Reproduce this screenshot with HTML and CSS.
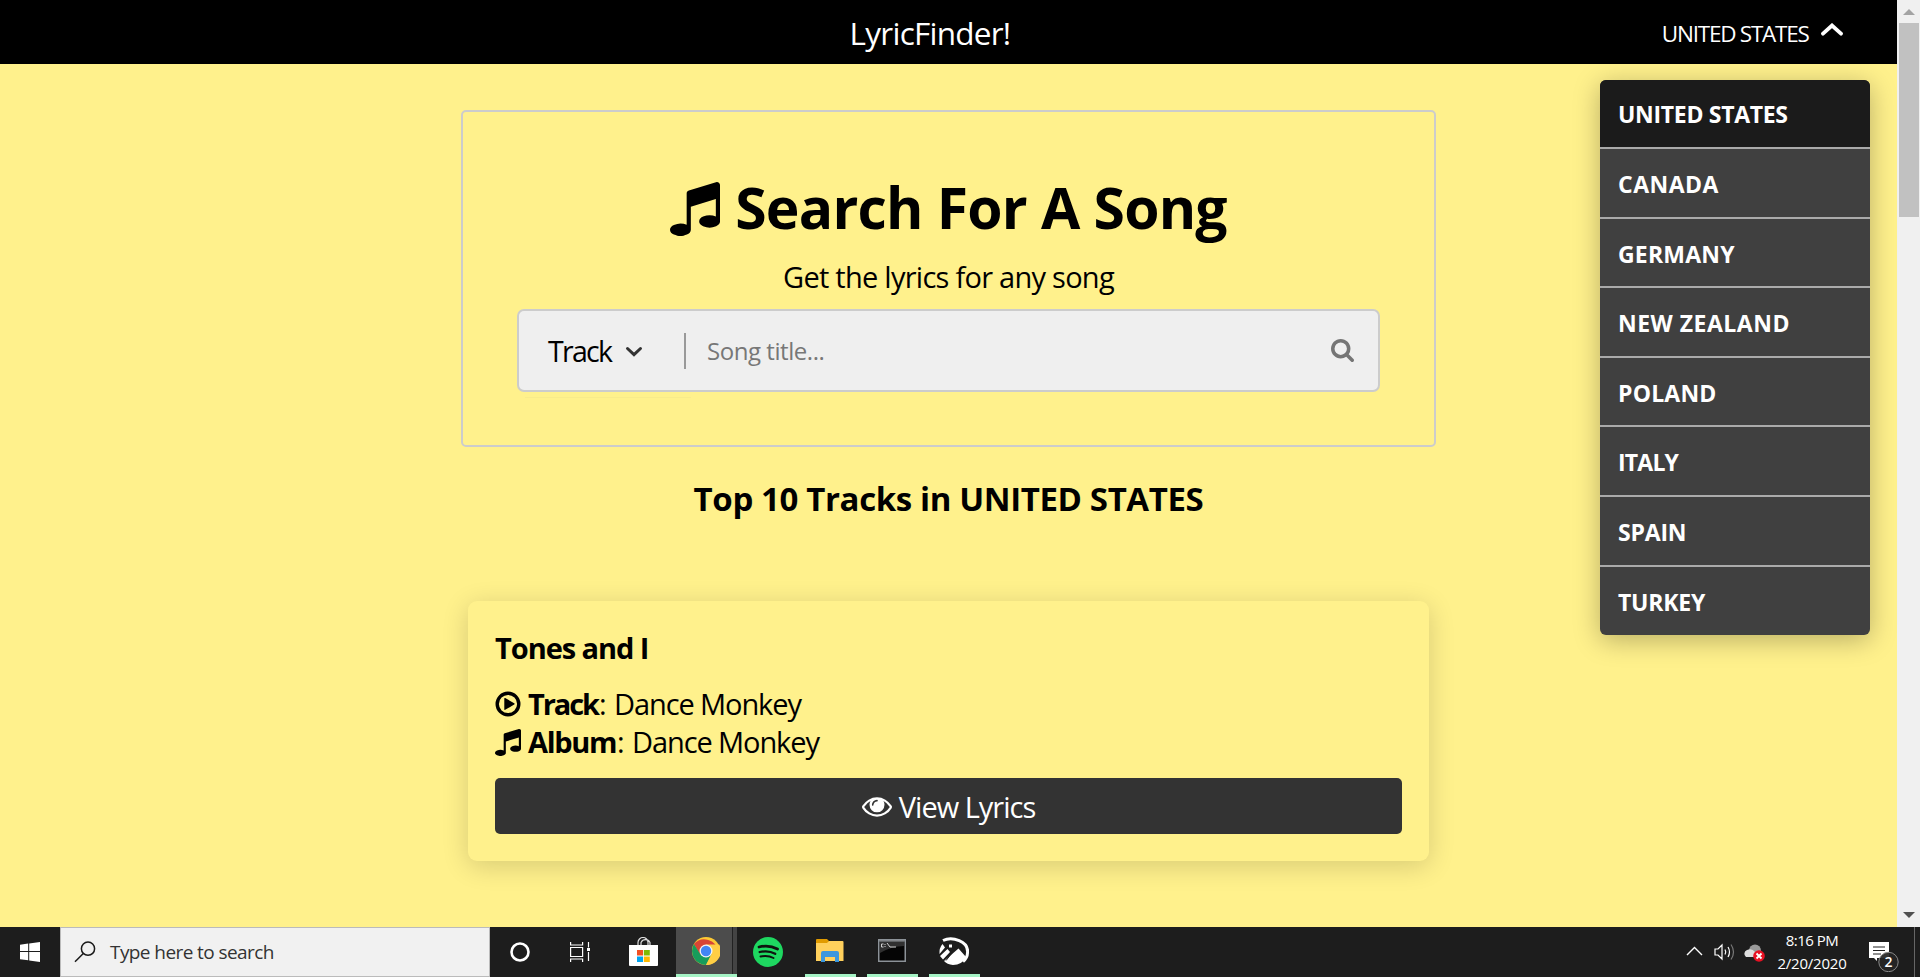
FILE: index.html
```html
<!DOCTYPE html>
<html lang="en">
<head>
<meta charset="utf-8">
<title>LyricFinder!</title>
<link rel="stylesheet" href="styles.css">
</head>
<body>
<svg class="defs" width="0" height="0">
  <symbol id="music" viewBox="0 128 1536 1664" preserveAspectRatio="none"><path d="M1536 224v1120q0 50-34 89t-86 60.500-103.500 32-96.500 10.500-96.500-10.500-103.500-32-86-60.500-34-89 34-89 86-60.500 103.500-32 96.500-10.500q105 0 192 39v-537l-768 237v709q0 50-34 89t-86 60.500-103.500 32-96.500 10.500-96.500-10.500-103.500-32-86-60.500-34-89 34-89 86-60.500 103.500-32 96.500-10.500q105 0 192 39v-967q0-31 19-56.500t49-35.500l832-256q12-4 28-4 40 0 68 28t28 68z"/></symbol>
</svg>
<div class="screen">
  <div class="browser">
    <div class="page">
      <header class="nav">
        <div></div>
        <div class="brand">LyricFinder!</div>
        <div class="country"><span>UNITED STATES</span>
          <svg class="up" viewBox="0 0 22 13"><path d="M2 10.700 11 2.500 20 10.700" fill="none" stroke="#fff" stroke-width="3.800" stroke-linecap="round"/></svg>
          <ul class="menu">
            <li class="active">UNITED STATES</li><li class="wide">CANADA</li><li>GERMANY</li><li class="wide">NEW ZEALAND</li><li>POLAND</li><li class="tight">ITALY</li><li class="snug">SPAIN</li><li class="snug">TURKEY</li>
          </ul>
        </div>
      </header>
      <main class="main">
        <section class="search">
          <h1><svg class="bignote"><use href="#music"/></svg><span>Search For A Song</span></h1>
          <p class="sub">Get the lyrics for any song</p>
          <div class="field">
            <span class="kind">Track</span>
            <svg class="down" viewBox="0 0 18 12"><path d="M2.500 2.500 9 8.700 15.500 2.500" fill="none" stroke="#333" stroke-width="3" stroke-linecap="round"/></svg>
            <span class="bar"></span>
            <span class="ph">Song title...</span>
            <svg class="glass" viewBox="0 128 1664 1664"><path d="M1152 832q0-185-131.500-316.500t-316.500-131.500-316.500 131.500-131.500 316.500 131.500 316.500 316.500 131.500 316.500-131.500 131.500-316.500zm512 832q0 52-38 90t-90 38q-54 0-90-38l-343-342q-179 124-399 124-143 0-273.500-55.500t-225-150-150-225-55.500-273.500 55.500-273.500 150-225 225-150 273.500-55.500 273.500 55.500 225 150 150 225 55.500 273.500q0 220-124 399l343 343q37 37 37 90z"/></svg>
          </div>
          <div class="hairline"></div>
        </section>
        <h2>Top 10 Tracks in UNITED STATES</h2>
        <article class="card">
          <h3>Tones and I</h3>
          <p class="row"><svg class="ico" viewBox="0 0 26 26"><circle cx="13" cy="13" r="10.800" fill="none" stroke="#000" stroke-width="3.400"/><path d="M9.300 7.600q0-1 .9-.5l9 5.200q.9.700 0 1.300l-9 5.200q-.9.500-.9-.5z"/></svg><b class="track">Track</b><span class="colon">:</span><span class="song">Dance Monkey</span></p>
          <p class="row"><svg class="ico note"><use href="#music"/></svg><b class="album">Album</b><span class="colon">:</span><span class="song">Dance Monkey</span></p>
          <div class="btn"><svg class="eye" viewBox="0 384 1792 1152"><path d="M1664 960q-152-236-381-353 61 104 61 225 0 185-131.500 316.500t-316.500 131.500-316.500-131.500-131.500-316.500q0-121 61-225-229 117-381 353 133 205 333.500 326.500t434.500 121.500 434.500-121.500 333.500-326.500zm-720-384q0-20-14-34t-34-14q-125 0-214.500 89.500t-89.500 214.500q0 20 14 34t34 14 34-14 14-34q0-86 61-147t147-61q20 0 34-14t14-34zm848 384q0 34-20 69-140 230-376.500 368.500t-499.500 138.500-499.500-139-376.500-368q-20-35-20-69t20-69q140-229 376.500-368t499.500-139 499.500 139 376.500 368q20 35 20 69z"/></svg><span>View Lyrics</span></div>
        </article>
      </main>
    </div>
    <div class="scroll">
      <svg width="12" height="6" viewBox="0 0 12 6"><path d="M6 0 12 6H0z" fill="#a3a3a3"/></svg>
      <div class="thumb"></div>
      <svg class="sdown" width="12" height="6" viewBox="0 0 12 6"><path d="M0 0H12L6 6z" fill="#505050"/></svg>
    </div>
  </div>
  <footer class="taskbar">
    <div class="start"><svg width="20" height="20" viewBox="0 0 20 20"><path d="M0 2.800 8.200 1.500V9H0zM9.200 1.400 20 0V9H9.200zM0 10h8.200v8.300L0 17.200zM9.200 10H20v10L9.200 18.500z" fill="#fff"/></svg></div>
    <div class="find"><svg width="22" height="22" viewBox="0 0 22 22"><g fill="none" stroke="#1a1a1a" stroke-width="1.500"><circle cx="14" cy="7.700" r="6.600"/><path d="M9.300 12.500 1 20.800"/></g></svg><span>Type here to search</span></div>
    <div class="tile t60"><svg width="22" height="22" viewBox="0 0 22 22"><circle cx="11" cy="11" r="8.500" fill="none" stroke="#fff" stroke-width="2.600"/></svg></div>
    <div class="tile t60"><svg width="20" height="20" viewBox="0 0 20 20"><g fill="none" stroke="#fff" stroke-width="1.200"><path d="M.6 0v3h12V0M.6 20v-3h12v3M.6 5.500h12v9H.6zM18.500 0v5.500M18.500 10v9"/></g><path d="M17 6h3v3h-3z" fill="#fff"/></svg></div>
    <div class="tile t64"><svg width="29" height="30" viewBox="0 0 29 30"><path d="M9 8V5.500a5 5 0 0 1 10 0V8M12 8V5.500a5 5 0 0 1 9 0V8" fill="none" stroke="#ddd" stroke-width="1.200"/><path d="M0 8h29v20q0 1-1 1H1q-1 0-1-1z" fill="#fff"/><path d="M8 13h6v5.500H8z" fill="#f25022"/><path d="M14.800 13h6v5.500h-6z" fill="#7fba00"/><path d="M8 19.500h6V25H8z" fill="#00a4ef"/><path d="M14.800 19.500h6V25h-6z" fill="#ffb900"/></svg></div>
    <div class="tile chrome"><svg width="28" height="28" viewBox="0 0 28 28"><circle cx="14" cy="14" r="14" fill="#fcc934"/><path d="M14 14H26.100A14 14 0 0 0 1.900 7L8 17.500z" fill="#d94536"/><path d="M14 28 19.500 17 14 14 8.500 17.500 1.900 7A14 14 0 0 0 14 28z" fill="#179c5b"/><path d="M14 7.500H27.200A14 14 0 0 1 14 28L19.800 17z" fill="#ffce44"/><circle cx="14" cy="14" r="6.500" fill="#f5f5f5"/><circle cx="14" cy="14" r="5.200" fill="#4285f4"/></svg></div>
    <div class="tile t65"><svg width="30" height="30" viewBox="0 0 30 30"><circle cx="15" cy="15" r="15" fill="#1ed760"/><g fill="none" stroke="#0f120f" stroke-linecap="round"><path d="M6 10q10-2.500 18.500 2" stroke-width="2.800"/><path d="M6.700 15q9-2 15.500 1.800" stroke-width="2.300"/><path d="M7.500 19.500q7.500-1.500 13 1.500" stroke-width="1.900"/></g></svg></div>
    <div class="tile t51 open"><svg width="28" height="24" viewBox="0 0 28 24"><path d="M0 1q0-1 1-1h10l2 2-1 3H0z" fill="#e19b00"/><path d="M0 4h11l2-2h13.500q1 0 1 1V22H0z" fill="#ffd05c"/><path d="M5 23V14q0-2 2-2h14q2 0 2 2v9h-4v-5H9v5z" fill="#3a96dd"/></svg></div>
    <div class="tile t51 open"><svg width="28" height="24" viewBox="0 0 28 24"><path d="M.75.750h26.500v21.500H.75z" fill="#050505" stroke="#8c9298" stroke-width="1.500"/><path d="M1.500 2h25" stroke="#bcc1c5"/><path d="M2 3h24v4Q14 7 2 14z" fill="#303030"/><path d="M5.500 5H3.500v3h2M7 5v1M7 7v1M9 4l3 4M12 8h6" fill="none" stroke="#d0d0d0"/></svg></div>
    <div class="tile t51 open"><svg width="30" height="28" viewBox="0 0 30 28"><path d="M4 3.500C13-1 30 4 28.500 16A14 12 0 0 1 24 24.500" fill="none" stroke="#fff" stroke-width="3"/><path d="M3.500 7Q0 11 .5 17L6 10.500zM1 19 8.500 12l2.500 3-7 7.500zM5 24 19.500 11.500 27 20Q23 28 14 28 8 27.500 5 24zM10 7.500h3v3h-3z" fill="#fff"/><path d="M7 23.500 13 16" stroke="#1d1d1d"/></svg></div>
    <div class="tray">
      <svg class="caret" width="17" height="10" viewBox="0 0 17 10"><path d="M1 9 8.500 1.500 16 9" fill="none" stroke="#fff" stroke-width="1.400"/></svg>
      <svg class="vol" width="21" height="18" viewBox="0 0 21 18"><g fill="none" stroke="#fff" stroke-width="1.200"><path d="M1 6h3l4-4v14l-4-4H1zM11 6.500q1.500 2.500 0 5M14 4q3 5 0 10"/><path d="M17 1.500q5 7.500 0 15" stroke="#777"/></g></svg>
      <svg class="cloud" width="22" height="18" viewBox="0 0 22 18"><circle cx="11" cy="6.500" r="6" fill="#999"/><path d="M2 13a4 4 0 0 1 1-7q5-2 8 2h5v5z" fill="#ddd"/><circle cx="15" cy="12" r="5.800" fill="#e81123"/><path d="m12.500 9.500 5 5m0-5-5 5" stroke="#fff" stroke-width="1.800"/></svg>
      <div class="clock"><span>8:16 PM</span><span class="date">2/20/2020</span></div>
      <svg class="note2" width="31" height="32" viewBox="0 0 31 32"><path d="M0 2h20v16H8v3l-3-3H0z" fill="#fff"/><path d="M4 7h12M4 10.500h12M4 14h8" stroke="#222" stroke-width="1.100"/><circle cx="19.500" cy="22" r="9.700" fill="#252525" fill-opacity=".93" stroke="#8a8a8a"/><text x="19.500" y="27" text-anchor="middle" class="badge">2</text></svg>
      <div class="peek"></div>
    </div>
  </footer>
</div>
</body>
</html>
```
FILE: styles.css
```css
* { box-sizing: border-box; margin: 0; padding: 0; }
body { width: 1920px; height: 977px; overflow: hidden; background: #fff18c; color: #000; font-family: "Open Sans", "Noto Sans", sans-serif; white-space: nowrap; }
svg { display: block; flex: none; }
.defs { position: absolute; }
.screen { display: flex; flex-direction: column; height: 977px; }
.browser { display: flex; height: 927px; overflow: hidden; }
.page { width: 1897px; }
.nav { height: 64px; background: #000; color: #fff; display: grid; grid-template-columns: 1fr auto 1fr; align-items: start; }
.brand { margin-right: 37px; padding-top: 11px; font-size: 31.5px; line-height: 44px; letter-spacing: -.75px; }
.country { display: flex; justify-content: flex-end; padding: 18px 54px 0 0; font-size: 22.500px; line-height: 32px; letter-spacing: -1.250px; position: relative; }
.up { width: 22px; height: 13px; margin: 5px 0 0 12.500px; }
.menu { position: absolute; top: 80px; right: 27px; width: 270px; list-style: none; border-radius: 6px; overflow: hidden; background: #404040; box-shadow: 0 5px 27px rgba(0,0,0,.28); font-size: 23px; font-weight: 700; }
.menu li { height: 69.600px; padding: 18px 0 0 18px; line-height: 34px; border-bottom: 2px solid #aaa; letter-spacing: .2px; }
.menu li:last-child { height: 68.300px; border: 0; }
.menu .active { height: 69.100px; padding-top: 17px; background: #1b1b1b; letter-spacing: -.3px; }
.menu .wide { letter-spacing: .5px; }
.menu .snug { letter-spacing: -.2px; }
.menu .tight { letter-spacing: -.8px; }
.main { display: flex; flex-direction: column; align-items: center; padding-top: 46px; }
.search { width: 975px; height: 337px; border: 2px solid #ccc; border-radius: 5px; padding: 56px 54px 0; }
h1 { display: flex; justify-content: center; height: 78px; font-size: 57px; line-height: 78px; letter-spacing: -.770px; }
.bignote { width: 50px; height: 54px; margin: 14px 15px 0 0; }
.sub { margin-top: 11px; text-align: center; font-size: 29px; line-height: 40px; letter-spacing: -.74px; }
.field { margin-top: 12px; height: 83px; background: #efefef; border: 2px solid #ccc; border-radius: 7px; display: flex; align-items: center; padding: 0 24px 0 29px; }
.kind { width: 65px; font-size: 28.500px; letter-spacing: -1.700px; }
.down { width: 18px; height: 12px; margin-left: 12px; margin-top: 3px; }
.bar { width: 2px; height: 36px; background: #999; margin-left: 41px; }
.ph { flex: 1; margin-left: 21px; font-size: 24px; color: #777; letter-spacing: -.45px; }
.glass { width: 23px; height: 23px; fill: #757575; }
.hairline { width: 166px; height: 1px; margin: 5px 0 0 8px; background: #f8eb8b; }
h2 { margin-top: 30px; font-size: 33px; line-height: 44px; letter-spacing: -.380px; }
.card { margin-top: 80px; width: 961px; height: 260px; border-radius: 9px; padding: 27px; box-shadow: 0 5px 27px rgba(0,0,0,.16); background: #fff18c; }
h3 { font-size: 29px; line-height: 40px; margin-bottom: 17px; letter-spacing: -1.050px; }
.row { display: flex; height: 38px; font-size: 29px; line-height: 38px; }
.ico { width: 26px; height: 26px; margin: 6px 7px 0 0; }
.note { height: 27px; }
.row b { font-weight: 700; letter-spacing: -1.300px; }
.row .track { width: 71px; letter-spacing: -2.100px; }
.album { width: 89px; }
.colon { width: 15px; }
.song { letter-spacing: -1.100px; }
.btn { margin-top: 17px; height: 56px; border-radius: 5px; background: #333; color: #fff; display: flex; justify-content: center; align-items: center; font-size: 29px; letter-spacing: -1px; }
.btn span { padding-top: 1px; }
.eye { width: 30px; height: 20px; margin: 2px 7px 0 0; fill: #fff; }
.scroll { width: 23px; background: #f0f0f0; display: flex; flex-direction: column; align-items: center; padding-top: 9px; }
.thumb { width: 20px; height: 194px; margin-top: 8px; background: #c1c1c1; }
.sdown { margin-top: 695px; }
.taskbar { height: 50px; background: #1d1d1d; color: #fff; display: flex; }
.start { width: 60px; padding: 15px 20px; }
.find { width: 430px; background: #f1f1f1; border: 1px solid #bbb; display: flex; align-items: center; padding-left: 13px; color: #333; font-size: 19px; letter-spacing: -.58px; }
.find span { margin-left: 14px; }
.tile { height: 50px; display: flex; align-items: center; justify-content: center; }
.t60 { width: 60px; }
.t64 { width: 66px; }
.t65 { width: 62px; margin-right: 6px; }
.t51 { width: 51px; margin-right: 11px; padding-right: 2px; }
.open { border-bottom: 3px solid #a5f3c5; }
.chrome { width: 61px; background: linear-gradient(90deg, #4c4c4c 56px, #222 56px, #222 57px, #444 57px); border-bottom: 3px solid #a5f3c5; padding-right: 1px; }
.tray { margin-left: auto; display: flex; }
.caret { margin: 19px 11px 0 0; }
.vol { margin: 16px 9px 0 0; }
.cloud { margin: 17px 12px 0 0; }
.clock { width: 68px; display: flex; flex-direction: column; align-items: center; font-size: 15px; line-height: 23px; padding-top: 2px; letter-spacing: -.5px; }
.date { letter-spacing: -.2px; }
.note2 { margin: 13px 0 0 23px; }
.badge { font-size: 14px; font-weight: 600; fill: #fff; }
.peek { width: 6px; border-left: 1px solid #666; margin-left: 14px; }
```
